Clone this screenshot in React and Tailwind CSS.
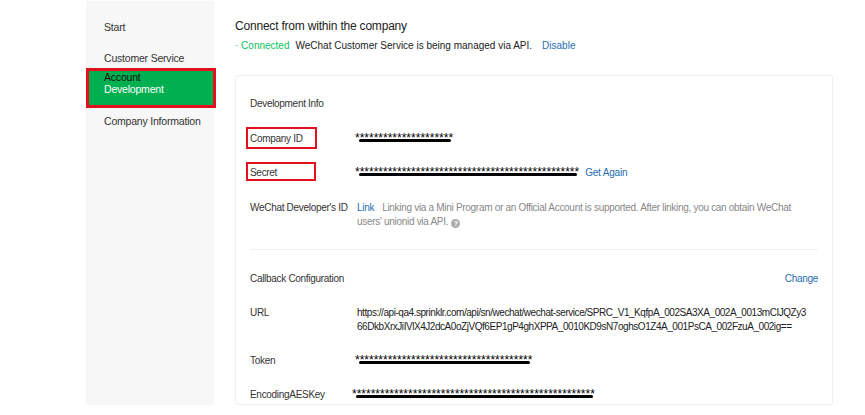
import React from 'react';

const font = { fontFamily: '"Liberation Sans", Arial, sans-serif' };

function Masked({ count, className = '' }) {
  return (
    <span className={`relative inline-block leading-none text-black text-[12px] ${className}`}>
      {'*'.repeat(count)}
      <span className="absolute left-[4px] right-[2px] top-[7px] h-[3px] rounded-full bg-black" />
    </span>
  );
}

function Marked({ children, box }) {
  return (
    <span className="relative inline-block">
      {children}
      <span className={`absolute border-2 border-[#e5101d] ${box}`} />
    </span>
  );
}

function Row({ label, children, className = '' }) {
  return (
    <div className={`flex items-start ${className}`}>
      <div className="w-[105px] shrink-0 text-[10px] leading-[14px] tracking-[-0.3px] text-[#333]">{label}</div>
      <div className="flex-1 text-[10px] leading-[14px]">{children}</div>
    </div>
  );
}

export default function App() {
  return (
    <div className="w-[865px] h-[415px] bg-white flex overflow-hidden" style={font}>
      {/* sidebar */}
      <aside className="ml-[86px] mt-px w-[128px] h-[404px] bg-[#f7f7f7] pt-[19px] text-[10.5px] tracking-[-0.2px] text-[#333]">
        <div className="pl-[18px] leading-[14px]">Start</div>
        <div className="pl-[18px] mt-[17px] leading-[14px]">Customer Service</div>
        <div className="ml-[3px] mt-[9px] w-[124px] h-[34px] bg-[#00b050] outline-[3px] outline-solid outline-[#e5101d] pl-[15px] leading-[12px]">
          <div className="text-[#111] -mt-[3px]">Account</div>
          <div className="text-white">Development</div>
        </div>
        <div className="pl-[18px] mt-[9px] leading-[14px]">Company Information</div>
      </aside>

      {/* content */}
      <main className="ml-[21px] w-[598px]">
        <h1 className="mt-[18px] text-[12px] leading-[16px] tracking-[-0.2px] text-[#222]">Connect from within the company</h1>
        <div className="mt-[5px] flex items-center text-[10px] leading-[14px]">
          <span className="text-[#07c160]">· Connected</span>
          <span className="ml-[6px] text-[#222]">WeChat Customer Service is being managed via API.</span>
          <span className="ml-[10px] text-[#1f6db1]">Disable</span>
        </div>

        <section className="mt-[22px] h-[330px] border border-[#f0f0f0] rounded-[3px] pl-[14px] pr-[14px] pt-[21px]">
          <div className="text-[10px] leading-[14px] tracking-[-0.3px] text-[#333]">Development Info</div>

          <Row className="mt-[21px]" label={<Marked box="-left-[4px] w-[71px] -top-[5px] h-[22px]">Company ID</Marked>}>
            <Masked count={21} />
          </Row>

          <Row className="mt-[20px]" label={<Marked box="-left-[4px] w-[70px] -top-[4px] h-[19px]">Secret</Marked>}>
            <Masked count={48} />
            <span className="ml-[6px] text-[#1f6db1] tracking-[-0.2px]">Get Again</span>
          </Row>

          <Row className="mt-[21px]" label="WeChat Developer's ID">
            <div className="pl-[2px] text-[#888] whitespace-nowrap tracking-[-0.3px]">
              <span className="text-[#1f6db1]">Link</span>
              <span className="ml-[8px]">Linking via a Mini Program or an Official Account is supported. After linking, you can obtain WeChat</span>
              <br />
              users' unionid via API.
              <span className="ml-[3px] inline-flex w-[9px] h-[9px] rounded-full bg-[#aaa] text-white text-[7px] leading-[9px] justify-center align-[-1px] font-bold">?</span>
            </div>
          </Row>

          <div className="mt-[20px] h-px bg-[#f0f0f0]" />

          <div className="mt-[22px] flex justify-between text-[10px] leading-[14px] tracking-[-0.3px]">
            <span className="text-[#333]">Callback Configuration</span>
            <span className="text-[#1f6db1]">Change</span>
          </div>

          <Row className="mt-[20px]" label="URL">
            <div className="pl-[2px] text-[#222] tracking-[-0.45px] whitespace-nowrap">
              https://api-qa4.sprinklr.com/api/sn/wechat/wechat-service/SPRC_V1_KqfpA_002SA3XA_002A_0013mCIJQZy3
              <br />
              66DkbXrxJiIVlX4J2dcA0oZjVQf6EP1gP4ghXPPA_0010KD9sN7oghsO1Z4A_001PsCA_002FzuA_002ig==
            </div>
          </Row>

          <Row className="mt-[20px]" label="Token">
            <Masked count={38} />
          </Row>

          <Row className="mt-[20px]" label="EncodingAESKey">
            <Masked count={52} className="-ml-[3px]" />
          </Row>
        </section>
      </main>
    </div>
  );
}
